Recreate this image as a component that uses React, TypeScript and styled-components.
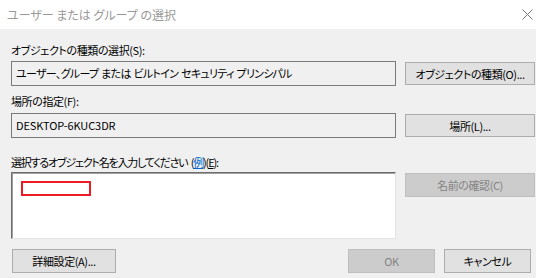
import React from "react";
import styled, { createGlobalStyle } from "styled-components";

const GlobalStyle = createGlobalStyle`
  html, body {
    margin: 0;
    padding: 0;
    background: #f0f0f0;
  }
  body {
    font-family: "Noto Sans CJK JP", "Noto Sans", sans-serif;
    font-size: 11px;
    color: #000;
    font-feature-settings: "palt";
  }
`;

const Window = styled.div`
  width: 536px;
  height: 278px;
  background: #f0f0f0;
  overflow: hidden;
`;

const TitleBar = styled.div`
  height: 29px;
  background: #fff;
  display: flex;
  align-items: center;
  justify-content: space-between;
  padding: 0 0 0 7px;
  box-sizing: border-box;
`;

const Title = styled.div`
  color: #999;
  font-size: 12px;
`;

const CloseButton = styled.div`
  width: 18px;
  height: 18px;
  display: flex;
  align-items: center;
  justify-content: center;
`;

const Content = styled.div`
  padding: 13px 0 0 11px;
`;

const Label = styled.div<{ $gap?: number; $spacing?: number }>`
  height: 16px;
  line-height: 16px;
  margin-bottom: ${(p) => p.$gap ?? 3}px;
  white-space: nowrap;
  letter-spacing: ${(p) => p.$spacing ?? -0.4}px;
  word-spacing: 2px;
`;

const Row = styled.div<{ $align?: string }>`
  display: flex;
  align-items: ${(p) => p.$align ?? "center"};
  gap: 9px;
`;

const Field = styled.div<{ $spacing?: number }>`
  width: 385px;
  height: 25px;
  box-sizing: border-box;
  border: 1px solid #7a7a7a;
  background: #f0f0f0;
  padding: 0 4px;
  line-height: 23px;
  white-space: nowrap;
  overflow: hidden;
  letter-spacing: ${(p) => p.$spacing ?? -0.7}px;
  word-spacing: 1px;
`;

const Section = styled.div<{ $top: number }>`
  margin-top: ${(p) => p.$top}px;
`;

const Button = styled.div<{ $w: number; $h?: number; $disabled?: boolean; $top?: number }>`
  width: ${(p) => p.$w}px;
  height: ${(p) => p.$h ?? 23}px;
  margin-top: ${(p) => p.$top ?? 0}px;
  box-sizing: border-box;
  border: 1px solid ${(p) => (p.$disabled ? "#bfbfbf" : "#adadad")};
  background: ${(p) => (p.$disabled ? "#cccccc" : "#e1e1e1")};
  color: ${(p) => (p.$disabled ? "#838383" : "#000")};
  display: flex;
  align-items: center;
  justify-content: center;
  white-space: nowrap;
  letter-spacing: -0.4px;
`;

const NameBox = styled.div`
  width: 385px;
  height: 67px;
  box-sizing: border-box;
  background: #fff;
  border: 1px solid;
  border-color: #6d6d6d #e3e3e3 #e3e3e3 #6d6d6d;
  box-shadow: inset 1px 1px 0 #a0a0a0;
  padding: 8px 0 0 9px;
`;

const Redacted = styled.div`
  width: 70px;
  height: 15px;
  box-sizing: border-box;
  border: 2px solid #ed1c24;
`;

const Link = styled.span`
  color: #0066cc;
  text-decoration: underline;
`;

const Key = styled.span`
  text-decoration: underline;
`;

const Footer = styled.div`
  display: flex;
  align-items: center;
  margin-top: 10px;
  padding-left: 1px;
  padding-right: 5px;
`;

const Spacer = styled.div`
  flex: 1;
`;

const FooterRight = styled.div`
  display: flex;
  gap: 9px;
`;

export default function App() {
  return (
    <Window>
      <GlobalStyle />
      <TitleBar>
        <Title>ユーザー または グループ の選択</Title>
        <CloseButton>
          <svg width="11" height="11" viewBox="0 0 11 11">
            <path d="M0.5 0.5 L10.5 10.5 M10.5 0.5 L0.5 10.5" stroke="#777" strokeWidth="1" fill="none" />
          </svg>
        </CloseButton>
      </TitleBar>
      <Content>
        <Label>オブジェクトの種類の選択(S):</Label>
        <Row>
          <Field>ユーザー、グループ または ビルトイン セキュリティ プリンシパル</Field>
          <Button $w={130}>オブジェクトの種類(O)...</Button>
        </Row>
        <Section $top={7}>
          <Label $gap={4}>場所の指定(F):</Label>
          <Row>
            <Field $spacing={-0.1}>DESKTOP-6KUC3DR</Field>
            <Button $w={130}>場所(L)...</Button>
          </Row>
        </Section>
        <Section $top={16}>
          <Label $gap={2} $spacing={-1.2}>
            選択するオブジェクト名を入力してください (<Link>例</Link>)(<Key>E</Key>):
          </Label>
          <Row $align="flex-start">
            <NameBox>
              <Redacted />
            </NameBox>
            <Button $w={130} $h={24} $top={1} $disabled>
              名前の確認(C)
            </Button>
          </Row>
        </Section>
        <Footer>
          <Button $w={104} $h={24}>詳細設定(A)...</Button>
          <Spacer />
          <FooterRight>
            <Button $w={87} $h={24} $disabled>OK</Button>
            <Button $w={87} $h={24}>キャンセル</Button>
          </FooterRight>
        </Footer>
      </Content>
    </Window>
  );
}
